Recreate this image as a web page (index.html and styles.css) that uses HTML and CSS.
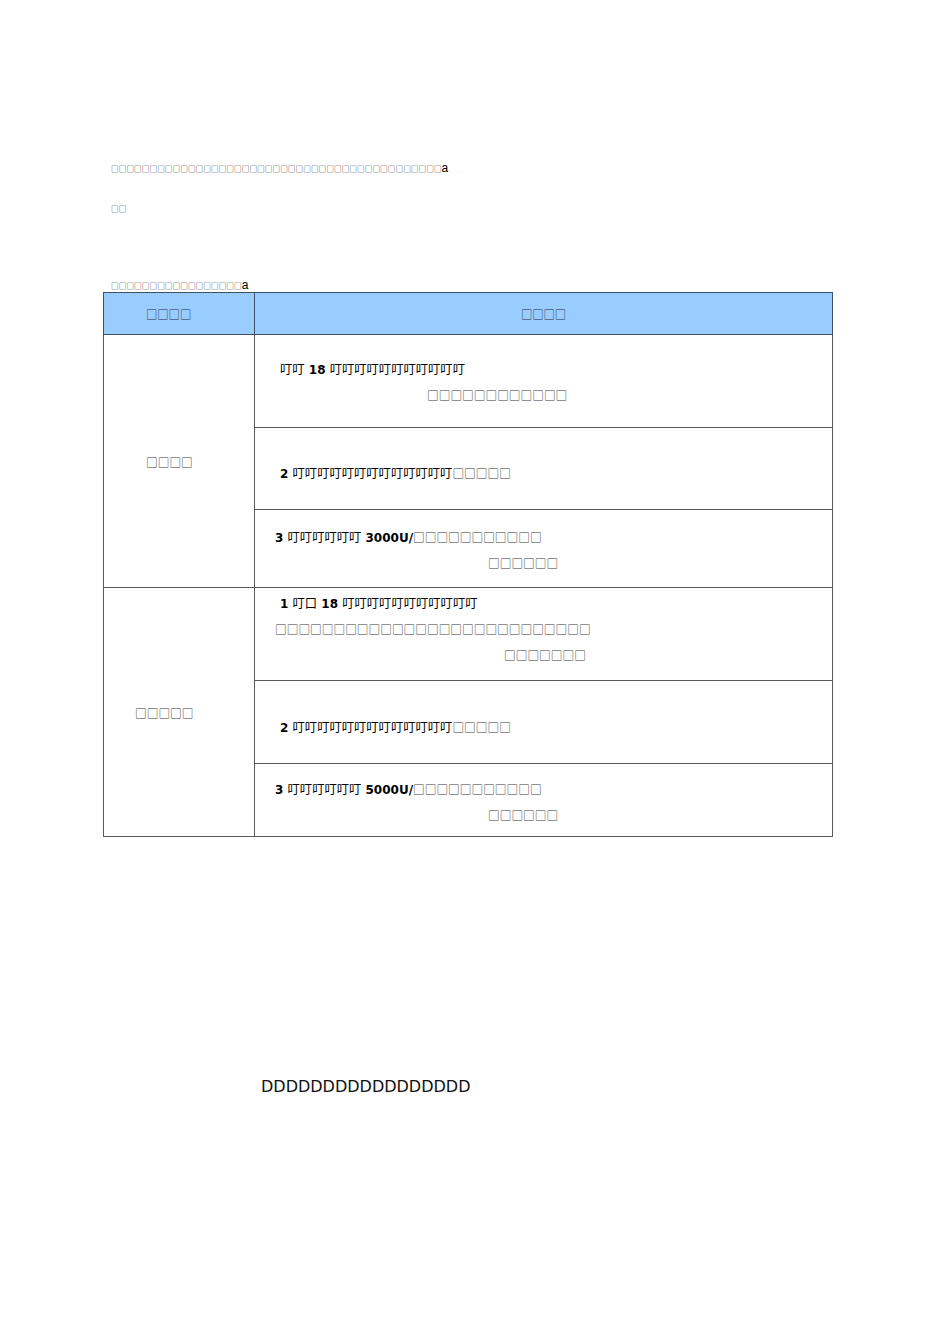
FILE: index.html
```html
<!DOCTYPE html>
<html lang="zh">
<head>
<meta charset="utf-8">
<title>Document</title>
<link rel="stylesheet" href="styles.css">
</head>
<body>
<div class="doc">
  <p class="note note-first"><span class="sq sq-sm">□□□□□□□□□□□□□□□□□□□□□□□□□□□□□□□□□□□□□□□□□□□</span><span class="lat">a</span></p>
  <p class="note note-second"><span class="sq sq-sm">□□</span></p>
  <p class="note note-caption"><span class="sq sq-sm">□□□□□□□□□□□□□□□□□</span><span class="lat">a</span></p>

  <table class="grid">
    <colgroup>
      <col class="col-left">
      <col class="col-right">
    </colgroup>
    <thead>
      <tr class="row-head">
        <th class="head-left"><span class="sq sq-head">□□□□</span></th>
        <th class="head-right"><span class="sq sq-head">□□□□</span></th>
      </tr>
    </thead>
    <tbody>
      <tr class="row-a1">
        <td class="group group-a" rowspan="3"><span class="sq sq-md">□□□□</span></td>
        <td class="item pad-a1">
          <div class="ln ind-25"><span class="cj">叮叮</span> 18 <span class="cj">叮叮叮叮叮叮叮叮叮叮叮</span></div>
          <div class="ln ind-172"><span class="sq sq-md">□□□□□□□□□□□□</span></div>
        </td>
      </tr>
      <tr class="row-a2">
        <td class="item pad-a2">
          <div class="ln ind-25">2 <span class="cj">叮叮叮叮叮叮叮叮叮叮叮叮叮</span><span class="sq sq-md">□□□□□</span></div>
        </td>
      </tr>
      <tr class="row-a3">
        <td class="item pad-a3">
          <div class="ln ind-20">3 <span class="cj">叮叮叮叮叮叮</span> 3000U/<span class="sq sq-md">□□□□□□□□□□□</span></div>
          <div class="ln ind-233"><span class="sq sq-md">□□□□□□</span></div>
        </td>
      </tr>
      <tr class="row-b1">
        <td class="group group-b" rowspan="3"><span class="sq sq-md">□□□□□</span></td>
        <td class="item pad-b1">
          <div class="ln ind-25">1 <span class="cj">叮口</span> 18 <span class="cj">叮叮叮叮叮叮叮叮叮叮叮</span></div>
          <div class="ln ind-20"><span class="sq sq-md">□□□□□□□□□□□□□□□□□□□□□□□□□□□</span></div>
          <div class="ln ind-249"><span class="sq sq-md">□□□□□□□</span></div>
        </td>
      </tr>
      <tr class="row-b2">
        <td class="item pad-b2">
          <div class="ln ind-25">2 <span class="cj">叮叮叮叮叮叮叮叮叮叮叮叮叮</span><span class="sq sq-md">□□□□□</span></div>
        </td>
      </tr>
      <tr class="row-b3">
        <td class="item pad-b3">
          <div class="ln ind-20">3 <span class="cj">叮叮叮叮叮叮</span> 5000U/<span class="sq sq-md">□□□□□□□□□□□</span></div>
          <div class="ln ind-233"><span class="sq sq-md">□□□□□□</span></div>
        </td>
      </tr>
    </tbody>
  </table>

  <p class="footer-line">DDDDDDDDDDDDDDDDD</p>
</div>
</body>
</html>
```

FILE: styles.css
```css
html, body {
  margin: 0;
  padding: 0;
  background: #ffffff;
}

body {
  font-family: "DejaVu Sans", "Noto Sans CJK SC", sans-serif;
  color: #000000;
}

.doc {
  padding: 157px 0 0 103px;
}

.note {
  margin: 0;
  padding-left: 8px;
  line-height: 20px;
  height: 20px;
  white-space: nowrap;
}

.note-second {
  margin-top: 20px;
}

.note-caption {
  margin-top: 59px;
  line-height: 16px;
  height: 16px;
}

.sq {
  font-family: "Noto Sans CJK SC", sans-serif;
  font-weight: normal;
  color: #3a3a3a;
  white-space: nowrap;
}

.sq-sm {
  font-size: 7.7px;
  color: #222222;
}

.sq-md {
  font-size: 11.7px;
}

.sq-head {
  font-size: 11.3px;
  color: #1f2f42;
}

.lat {
  font-family: "Liberation Sans", Arial, sans-serif;
  font-size: 12px;
}

.grid {
  border-collapse: collapse;
  table-layout: fixed;
  width: 729px;
  margin: 0;
}

.col-left {
  width: 151px;
}

.col-right {
  width: 578px;
}

.grid th,
.grid td {
  border: 1px solid #5a5a5a;
  padding: 0;
}

.grid th {
  background: #99ccff;
  border-color: #3e5062;
  font-weight: normal;
  height: 41px;
  vertical-align: middle;
}

.grid .head-left {
  text-align: left;
  padding-left: 42px;
}

.grid .head-right {
  text-align: center;
}

.grid .group {
  vertical-align: middle;
  text-align: left;
}

.grid .group-a {
  padding-left: 42px;
}

.grid .group-b {
  padding-left: 31px;
}

.grid .item {
  vertical-align: top;
  font-size: 12px;
  font-weight: bold;
}

.ln {
  line-height: 26px;
  height: 26px;
  white-space: nowrap;
}

.cj {
  font-family: "Noto Sans CJK SC", sans-serif;
  font-weight: normal;
  font-size: 12.3px;
}

.ind-20 { padding-left: 20px; }
.ind-25 { padding-left: 25px; }
.ind-172 { padding-left: 172px; }
.ind-233 { padding-left: 233px; }
.ind-249 { padding-left: 249px; }

.row-a1 { height: 93px; }
.row-a2 { height: 82px; }
.row-a3 { height: 78px; }
.row-b1 { height: 93px; }
.row-b2 { height: 83px; }
.row-b3 { height: 73px; }

.grid .pad-a1 { padding-top: 21px; }
.grid .pad-a2 { padding-top: 32px; }
.grid .pad-a3 { padding-top: 14px; }
.grid .pad-b1 { padding-top: 2px; }
.grid .pad-b2 { padding-top: 33px; }
.grid .pad-b3 { padding-top: 12px; }

.footer-line {
  margin: 240px 0 0 0;
  padding-left: 158px;
  font-family: "DejaVu Sans", sans-serif;
  font-size: 16px;
  line-height: 20px;
  color: #111111;
}
```
